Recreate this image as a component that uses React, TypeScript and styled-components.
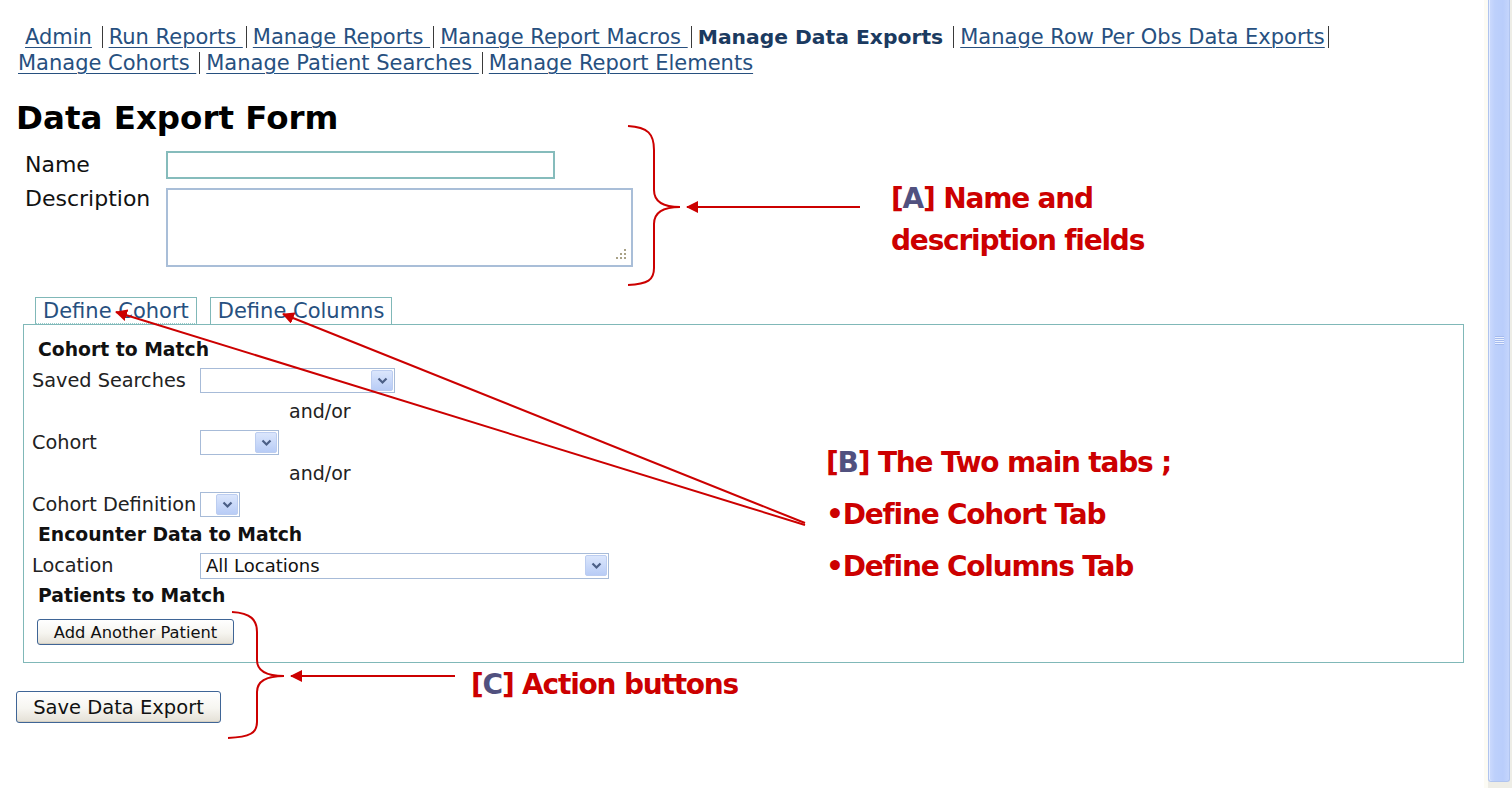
import React from "react";
import styled, { createGlobalStyle } from "styled-components";

const GlobalStyle = createGlobalStyle`
  html, body { margin: 0; padding: 0; background: #fff; }
  body { font-family: "DejaVu Sans", Verdana, sans-serif; color: #111; }
  * { box-sizing: border-box; }
`;

const Page = styled.div`
  position: relative;
  width: 1512px;
  height: 788px;
  overflow: hidden;
  display: flex;
  background: #fff;
`;

const Main = styled.main`
  flex: 1;
  padding: 24px 13px 0 16px;
`;

/* ---------- navigation ---------- */
const Nav = styled.nav`
  display: flex;
  flex-direction: column;
  font-size: 21px;
  line-height: 26px;
`;

const NavLine = styled.div<{ $indent?: number }>`
  display: flex;
  align-items: center;
  white-space: pre;
  padding-left: ${(p) => p.$indent ?? 2}px;
  height: 26px;
`;

const NavLink = styled.a`
  color: #27507f;
  text-decoration: underline;
  text-underline-offset: 3px;
  text-decoration-thickness: 1px;
`;

const NavCurrent = styled.span`
  font-weight: bold;
  font-size: 20.3px;
  color: #1b3a60;
`;

const Sep = styled.span<{ $l?: number; $r?: number }>`
  display: inline-block;
  width: 1px;
  height: 22px;
  background: #3a3a3a;
  margin: 0 ${(p) => p.$r ?? 6}px 0 ${(p) => p.$l ?? 3}px;
`;

/* ---------- form ---------- */
const Title = styled.h1`
  margin: 23px 0 14px;
  font-size: 32.5px;
  line-height: 38px;
  font-weight: bold;
  color: #000;
`;

const FieldGrid = styled.div`
  display: grid;
  grid-template-columns: 141px auto;
  row-gap: 9px;
  padding-left: 9px;
  align-items: start;
`;

const FieldLabel = styled.label<{ $lh: number }>`
  font-size: 22px;
  line-height: ${(p) => p.$lh}px;
  color: #111;
`;

const NameInput = styled.div`
  width: 389px;
  height: 28px;
  border: 2px solid #86bcbc;
  background: #fff;
`;

const TextArea = styled.div`
  position: relative;
  width: 467px;
  height: 79px;
  border: 2px solid #a9bed8;
  background: #fff;
`;

const Grip = styled.svg`
  position: absolute;
  right: 3px;
  bottom: 3px;
`;

/* ---------- tabs ---------- */
const TabStrip = styled.div`
  display: flex;
  gap: 13px;
  margin-top: 30px;
  padding-left: 19px;
`;

const Tab = styled.div<{ $active?: boolean }>`
  height: 27px;
  padding: 0 7px 0 7px;
  border: 1px solid #80b8b8;
  border-bottom: ${(p) => (p.$active ? "1px dotted #9cc" : "none")};
  background: #fff;
  font-size: 21px;
  line-height: 26px;
  color: #27507f;
  margin-bottom: ${(p) => (p.$active ? "-1px" : "0")};
  position: relative;
  z-index: ${(p) => (p.$active ? 1 : 0)};
`;

const Panel = styled.section`
  margin: 0 7px;
  border: 1px solid #80b8b8;
  padding: 10px 8px 17px 8px;
`;

const SectionHead = styled.div`
  height: 30px;
  line-height: 30px;
  padding-left: 6px;
  font-size: 18.8px;
  font-weight: bold;
  color: #111;
`;

const Row = styled.div`
  display: grid;
  grid-template-columns: 168px auto;
  align-items: center;
  height: 31px;
`;

const RowLabel = styled.span`
  font-size: 19.3px;
  color: #222;
`;

const AndOr = styled.div`
  height: 31px;
  line-height: 31px;
  padding-left: 257px;
  font-size: 19px;
  color: #222;
`;

const Select = styled.div<{ $w: number; $h?: number }>`
  display: flex;
  align-items: center;
  justify-content: space-between;
  width: ${(p) => p.$w}px;
  height: ${(p) => p.$h ?? 25}px;
  border: 1px solid #a7bbd8;
  background: #fff;
  padding: 0 1px 0 5px;
  font-size: 18px;
  color: #111;
`;

const SelectArrow = styled.span`
  flex: none;
  width: 22px;
  height: 21px;
  border: 1px solid #bccdf0;
  border-radius: 2px;
  background: linear-gradient(#dbe6fc, #b8ccf6);
  display: flex;
  align-items: center;
  justify-content: center;
`;

const ButtonRow = styled.div`
  margin-top: 8px;
  padding-left: 5px;
`;

const Button = styled.button<{ $w: number; $h: number; $fs: number }>`
  width: ${(p) => p.$w}px;
  height: ${(p) => p.$h}px;
  font-family: "DejaVu Sans", Verdana, sans-serif;
  font-size: ${(p) => p.$fs}px;
  color: #111;
  border: 1px solid #3f6596;
  border-radius: 3px;
  background: linear-gradient(#ffffff, #f6f5f0 55%, #e4e0d6);
  box-shadow: inset 0 -1px 0 #d6d0c2;
  padding: 0;
`;

const SaveWrap = styled.div`
  margin-top: 28px;
`;

/* ---------- scrollbar ---------- */
const ScrollCol = styled.aside`
  width: 28px;
  display: flex;
  flex-direction: column;
  background: #eeede6;
  border-left: 4px solid #fcfbf4;
`;

const Thumb = styled.div`
  height: 782px;
  margin-right: 2px;
  border: 1px solid #b0c4ef;
  border-top: none;
  border-radius: 0 0 3px 3px;
  background: linear-gradient(to right, #ccdafd, #bdd0fb 30%, #b9cdfb 70%, #c4d5fc);
  box-shadow: inset 1px 0 0 #e6eeff;
  display: flex;
  justify-content: center;
  padding-top: 336px;
`;

const GripLines = styled.div`
  width: 9px;
  height: 9px;
  background: repeating-linear-gradient(#a5bbee 0 1px, #e8efff 1px 2px);
`;

/* ---------- annotations ---------- */
const Overlay = styled.div`
  position: absolute;
  inset: 0;
  z-index: 5;
  pointer-events: none;
`;

const AnnoSvg = styled.svg`
  position: absolute;
  left: 0;
  top: 0;
`;

const AnnoText = styled.div<{ $x: number; $y: number; $lh: number }>`
  position: absolute;
  left: ${(p) => p.$x}px;
  top: ${(p) => p.$y}px;
  line-height: ${(p) => p.$lh}px;
  font-size: 28px;
  font-weight: bold;
  letter-spacing: -1.2px;
  color: #cc0000;
  white-space: nowrap;
`;

const Key = styled.span`
  color: #51517f;
`;

const Chevron = () => (
  <svg width="11" height="8" viewBox="0 0 11 8">
    <path d="M1.5 1.5 L5.5 5.5 L9.5 1.5" fill="none" stroke="#4b5f86" strokeWidth="2.2" />
  </svg>
);

const Drop: React.FC<{ w: number; h?: number; value?: string }> = ({ w, h, value }) => (
  <Select $w={w} $h={h}>
    <span>{value ?? ""}</span>
    <SelectArrow>
      <Chevron />
    </SelectArrow>
  </Select>
);

export default function App() {
  return (
    <>
      <GlobalStyle />
      <Page>
        <Main>
          <Nav>
            <NavLine $indent={9}>
              <NavLink>Admin</NavLink>
              <span> </span>
              <Sep />
              <NavLink>Run Reports </NavLink>
              <Sep />
              <NavLink>Manage Reports </NavLink>
              <Sep />
              <NavLink>Manage Report Macros </NavLink>
              <Sep />
              <NavCurrent>Manage Data Exports </NavCurrent>
              <Sep />
              <NavLink>Manage Row Per Obs Data Exports</NavLink>
              <Sep $l={3} />
            </NavLine>
            <NavLine>
              <NavLink>Manage Cohorts </NavLink>
              <Sep />
              <NavLink>Manage Patient Searches </NavLink>
              <Sep />
              <NavLink>Manage Report Elements</NavLink>
            </NavLine>
          </Nav>

          <Title>Data Export Form</Title>

          <FieldGrid>
            <FieldLabel $lh={28}>Name</FieldLabel>
            <NameInput />
            <FieldLabel $lh={22}>Description</FieldLabel>
            <TextArea>
              <Grip width="14" height="14" viewBox="0 0 14 14">
                {[
                  [11, 2],
                  [7, 6],
                  [11, 6],
                  [3, 10],
                  [7, 10],
                  [11, 10],
                ].map(([cx, cy]) => (
                  <rect key={`${cx}-${cy}`} x={cx - 1} y={cy - 1} width="2" height="2" fill="#a9a287" />
                ))}
              </Grip>
            </TextArea>
          </FieldGrid>

          <TabStrip>
            <Tab $active>Define Cohort</Tab>
            <Tab>Define Columns</Tab>
          </TabStrip>
          <Panel>
            <SectionHead>Cohort to Match</SectionHead>
            <Row>
              <RowLabel>Saved Searches</RowLabel>
              <Drop w={195} />
            </Row>
            <AndOr>and/or</AndOr>
            <Row>
              <RowLabel>Cohort</RowLabel>
              <Drop w={79} />
            </Row>
            <AndOr>and/or</AndOr>
            <Row>
              <RowLabel>Cohort Definition</RowLabel>
              <Drop w={40} />
            </Row>
            <SectionHead>Encounter Data to Match</SectionHead>
            <Row>
              <RowLabel>Location</RowLabel>
              <Drop w={409} h={26} value="All Locations" />
            </Row>
            <SectionHead>Patients to Match</SectionHead>
            <ButtonRow>
              <Button $w={197} $h={26} $fs={16.3}>Add Another Patient</Button>
            </ButtonRow>
          </Panel>

          <SaveWrap>
            <Button $w={205} $h={32} $fs={19.5}>Save Data Export</Button>
          </SaveWrap>
        </Main>

        <ScrollCol>
          <Thumb>
            <GripLines />
          </Thumb>
        </ScrollCol>

        <Overlay>
          <AnnoSvg width="1512" height="788" viewBox="0 0 1512 788">
            <defs>
              <marker id="head" viewBox="0 0 12 12" refX="11" refY="6" markerWidth="12" markerHeight="12" markerUnits="userSpaceOnUse" orient="auto">
                <path d="M0 0 L12 6 L0 12 Z" fill="#cc0000" />
              </marker>
            </defs>
            <g fill="none" stroke="#cc0000" strokeWidth="2">
              <path d="M628 126 C648 127, 654 134, 654 150 L654 190 C654 202, 664 207, 680 207 C664 207, 654 212, 654 224 L654 268 C654 280, 648 284, 628 285" />
              <line x1="860" y1="207" x2="687" y2="207" markerEnd="url(#head)" />
              <path d="M232 612 C251 613, 257 620, 257 632 L257 660 C257 671, 267 676, 284 676 C267 676, 257 681, 257 692 L257 722 C257 733, 250 737, 228 738" />
              <line x1="455" y1="676" x2="291" y2="676" markerEnd="url(#head)" />
              <line x1="805" y1="525" x2="116" y2="312" markerEnd="url(#head)" />
              <line x1="805" y1="523" x2="283" y2="314" markerEnd="url(#head)" />
            </g>
          </AnnoSvg>
          <AnnoText $x={891} $y={178} $lh={42}>
            [<Key>A</Key>] Name and
            <br />
            description fields
          </AnnoText>
          <AnnoText $x={826} $y={437} $lh={52}>
            [<Key>B</Key>] The Two main tabs ;
            <br />
            •Define Cohort Tab
            <br />
            •Define Columns Tab
          </AnnoText>
          <AnnoText $x={471} $y={664} $lh={42}>
            [<Key>C</Key>] Action buttons
          </AnnoText>
        </Overlay>
      </Page>
    </>
  );
}
